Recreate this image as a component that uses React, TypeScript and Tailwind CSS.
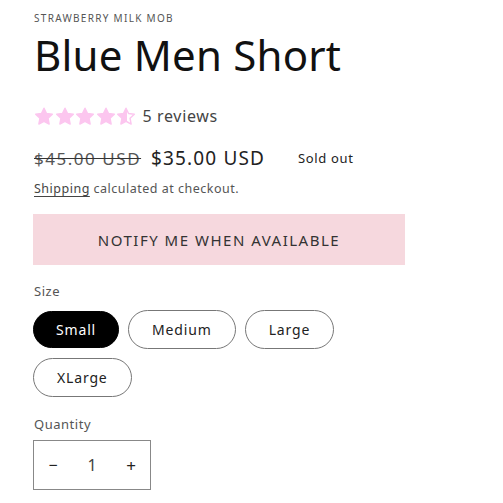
import { useState } from "react";

const sizes = ["Small", "Medium", "Large", "XLarge"];

function Star({ fill = 1 }: { fill?: number }) {
  const id = `half-${fill}`;
  return (
    <svg width="20" height="19" viewBox="0 0 24 24" className="shrink-0">
      <defs>
        <linearGradient id={id}>
          <stop offset={`${fill * 100}%`} stopColor="#fcc6ef" />
          <stop offset={`${fill * 100}%`} stopColor="#ffffff" />
        </linearGradient>
      </defs>
      <path
        d="M12 1.5l3.2 6.7 7.3.9-5.4 5.1 1.4 7.3L12 18l-6.5 3.5 1.4-7.3-5.4-5.1 7.3-.9z"
        fill={`url(#${id})`}
        stroke="#fcc6ef"
        strokeWidth="1.8"
        strokeLinejoin="round"
      />
    </svg>
  );
}

const marks = [
  "left-[200px] top-[-10px]",
  "left-[330px] top-[40px]",
  "left-[130px] top-[170px]",
  "left-[330px] top-[210px]",
  "left-[80px] top-[370px]",
  "left-[260px] top-[400px]",
  "left-[-60px] top-[130px]",
  "left-[-40px] top-[290px]",
  "left-[440px] top-[470px]",
];

export default function App() {
  const [size, setSize] = useState("Small");
  const [qty, setQty] = useState(1);

  return (
    <div className="relative h-[503px] w-[503px] overflow-hidden bg-white font-['Noto_Sans',sans-serif] text-[#121212]">
      <div className="flex flex-col px-[34px] pt-[11px]">
        <p className="text-[10px] tracking-[0.13em] text-[#555]">STRAWBERRY MILK MOB</p>
        <h1 className="mt-[3px] text-[42px] leading-[52px] tracking-[0.005em] text-[#111]">
          Blue Men Short
        </h1>

        <div className="mt-[23px] flex items-center gap-[0.5px]">
          <Star />
          <Star />
          <Star />
          <Star />
          <Star fill={0.55} />
          <span className="ml-[6px] text-[16px] tracking-[0.04em] text-[#444]">5 reviews</span>
        </div>

        <div className="mt-[16px] flex items-center">
          <span className="text-[17px] tracking-[0.09em] text-[#555] line-through decoration-[#333]">
            $45.00 USD
          </span>
          <span className="ml-[10px] text-[19px] tracking-[0.06em] text-[#222]">$35.00 USD</span>
          <span className="ml-[33px] text-[13px] tracking-[0.05em] text-[#222]">Sold out</span>
        </div>

        <p className="mt-[7px] text-[12.5px] tracking-[0.04em] text-[#555]">
          <span className="text-[#444] underline underline-offset-[3px]">Shipping</span> calculated at checkout.
        </p>

        <button className="mt-[16px] -ml-[1px] flex h-[51px] w-[372px] items-center justify-center bg-[#f6d8de] text-[15px] tracking-[0.1em] text-[#333]">
          NOTIFY ME WHEN AVAILABLE
        </button>

        <p className="mt-[17px] text-[13px] tracking-[0.04em] text-[#555]">Size</p>

        <div className="mt-[8px] flex w-[320px] flex-wrap items-center gap-x-[9px] gap-y-[9px] -ml-[1px]">
          {sizes.map((s) => (
            <button
              key={s}
              onClick={() => setSize(s)}
              className={
                s === size
                  ? "h-[37px] rounded-full border border-black bg-black px-[22px] text-[14px] tracking-[0.06em] text-white"
                  : "h-[39px] rounded-full border border-[#777] bg-white px-[23px] text-[14px] tracking-[0.06em] text-[#222]"
              }
            >
              {s}
            </button>
          ))}
        </div>

        <p className="mt-[18px] text-[13px] tracking-[0.04em] text-[#555]">Quantity</p>

        <div className="mt-[6px] -ml-[1px] flex h-[50px] w-[118px] items-center justify-between border border-[#888] px-[12px] text-[#222]">
          <button onClick={() => setQty(Math.max(1, qty - 1))} className="w-[14px] text-[16px]">
            −
          </button>
          <span className="text-[16px] text-[#444]">{qty}</span>
          <button onClick={() => setQty(qty + 1)} className="w-[14px] text-[17px]">
            +
          </button>
        </div>
      </div>

      {marks.map((m) => (
        <span
          key={m}
          className={`pointer-events-none absolute ${m} -rotate-[32deg] text-[30px] font-bold text-[#000]/[0.02] select-none`}
        >
          CouponBirds
        </span>
      ))}
    </div>
  );
}
